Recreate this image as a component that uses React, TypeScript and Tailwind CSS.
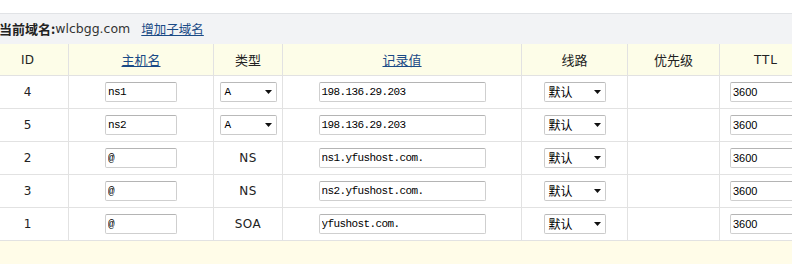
import React from "react";

type Rec = {
  id: string;
  host: string;
  type: string;
  typeEditable: boolean;
  value: string;
};

const records: Rec[] = [
  { id: "4", host: "ns1", type: "A", typeEditable: true, value: "198.136.29.203" },
  { id: "5", host: "ns2", type: "A", typeEditable: true, value: "198.136.29.203" },
  { id: "2", host: "@", type: "NS", typeEditable: false, value: "ns1.yfushost.com." },
  { id: "3", host: "@", type: "NS", typeEditable: false, value: "ns2.yfushost.com." },
  { id: "1", host: "@", type: "SOA", typeEditable: false, value: "yfushost.com." },
];

const cjk = "font-['Noto_Sans_CJK_SC',sans-serif]";
const sans = "font-['DejaVu_Sans',sans-serif]";

function Arrow() {
  return (
    <svg width="7" height="4" viewBox="0 0 7 4" className="shrink-0">
      <polygon points="0,0 7,0 3.5,4" fill="#111" />
    </svg>
  );
}

function FakeSelect({ label, width, cn }: { label: string; width: string; cn: boolean }) {
  return (
    <div
      className={`${width} flex h-[20px] items-center justify-between rounded-[2px] border border-[#cbcbcb] border-t-[#b9b9b9] bg-white pl-[4px] pr-[4px]`}
    >
      <span
        className={
          cn
            ? `${cjk} text-[12px] leading-none text-black`
            : "font-['Liberation_Mono',monospace] text-[11px] leading-none text-black"
        }
      >
        {label}
      </span>
      <Arrow />
    </div>
  );
}

function TextBox({ value, width, mono = true }: { value: string; width: string; mono?: boolean }) {
  return (
    <input
      readOnly
      value={value}
      className={`${width} h-[20px] rounded-[2px] border border-[#cfcfcf] border-t-[#b4b4b4] bg-white px-[2px] text-black outline-none ${
        mono
          ? "font-['Liberation_Mono',monospace] text-[11px] tracking-[-0.6px]"
          : "font-['Liberation_Sans',sans-serif] text-[11px]"
      }`}
    />
  );
}

export default function App() {
  return (
    <div className="h-[264px] w-full overflow-hidden bg-white">
      <div className="ml-[-13px] w-[825px] pt-[13px]">
        {/* domain bar */}
        <div className="flex h-[31px] items-center border-t border-[#e1e3e6] bg-[#f2f3f5] pl-[12px]">
          <span className={`${cjk} text-[13px] font-bold text-[#222]`}>当前域名:</span>
          <span className={`${sans} text-[12.5px] text-[#333]`}>wlcbgg.com</span>
          <a href="#" className={`${cjk} ml-[11px] text-[12.5px] text-[#1a4a86] underline`}>
            增加子域名
          </a>
        </div>

        {/* header */}
        <div className="flex h-[32px] border-b border-[#e2e2e2] bg-[#fdfde8] text-[#222]">
          <div className={`${sans} flex w-[82px] items-center justify-center border-r border-[#e2e2e2] text-[12px]`}>ID</div>
          <div className="flex w-[145px] items-center justify-center border-r border-[#e2e2e2]">
            <a href="#" className={`${cjk} text-[13px] text-[#1a4a86] underline`}>主机名</a>
          </div>
          <div className={`${cjk} flex w-[69px] items-center justify-center border-r border-[#e2e2e2] text-[13px]`}>类型</div>
          <div className="flex w-[239px] items-center justify-center border-r border-[#e2e2e2]">
            <a href="#" className={`${cjk} text-[13px] text-[#1a4a86] underline`}>记录值</a>
          </div>
          <div className={`${cjk} flex w-[106px] items-center justify-center border-r border-[#e2e2e2] text-[13px]`}>线路</div>
          <div className={`${cjk} flex w-[92px] items-center justify-center border-r border-[#e2e2e2] text-[13px]`}>优先级</div>
          <div className={`${sans} flex w-[92px] items-center justify-center text-[12px] tracking-[1px]`}>TTL</div>
        </div>

        {/* records */}
        {records.map((r) => (
          <div key={r.id} className="flex h-[33px] border-b border-[#e2e2e2] bg-white text-[#222]">
            <div className={`${sans} flex w-[82px] items-center justify-center border-r border-[#e2e2e2] text-[12px]`}>
              {r.id}
            </div>
            <div className="flex w-[145px] items-center justify-center border-r border-[#e2e2e2]">
              <TextBox value={r.host} width="w-[72px]" />
            </div>
            <div className="flex w-[69px] items-center justify-center border-r border-[#e2e2e2]">
              {r.typeEditable ? (
                <FakeSelect label={r.type} width="w-[57px]" cn={false} />
              ) : (
                <span className={`${sans} text-[12px] tracking-[0.5px]`}>{r.type}</span>
              )}
            </div>
            <div className="flex w-[239px] items-center justify-center border-r border-[#e2e2e2]">
              <TextBox value={r.value} width="w-[167px]" />
            </div>
            <div className="flex w-[106px] items-center justify-center border-r border-[#e2e2e2]">
              <FakeSelect label="默认" width="w-[62px]" cn />
            </div>
            <div className="w-[92px] border-r border-[#e2e2e2]" />
            <div className="flex w-[92px] items-center justify-center">
              <TextBox value="3600" width="w-[72px]" mono={false} />
            </div>
          </div>
        ))}

        {/* footer */}
        <div className="h-[40px] bg-[#fffce8]" />
      </div>
    </div>
  );
}
